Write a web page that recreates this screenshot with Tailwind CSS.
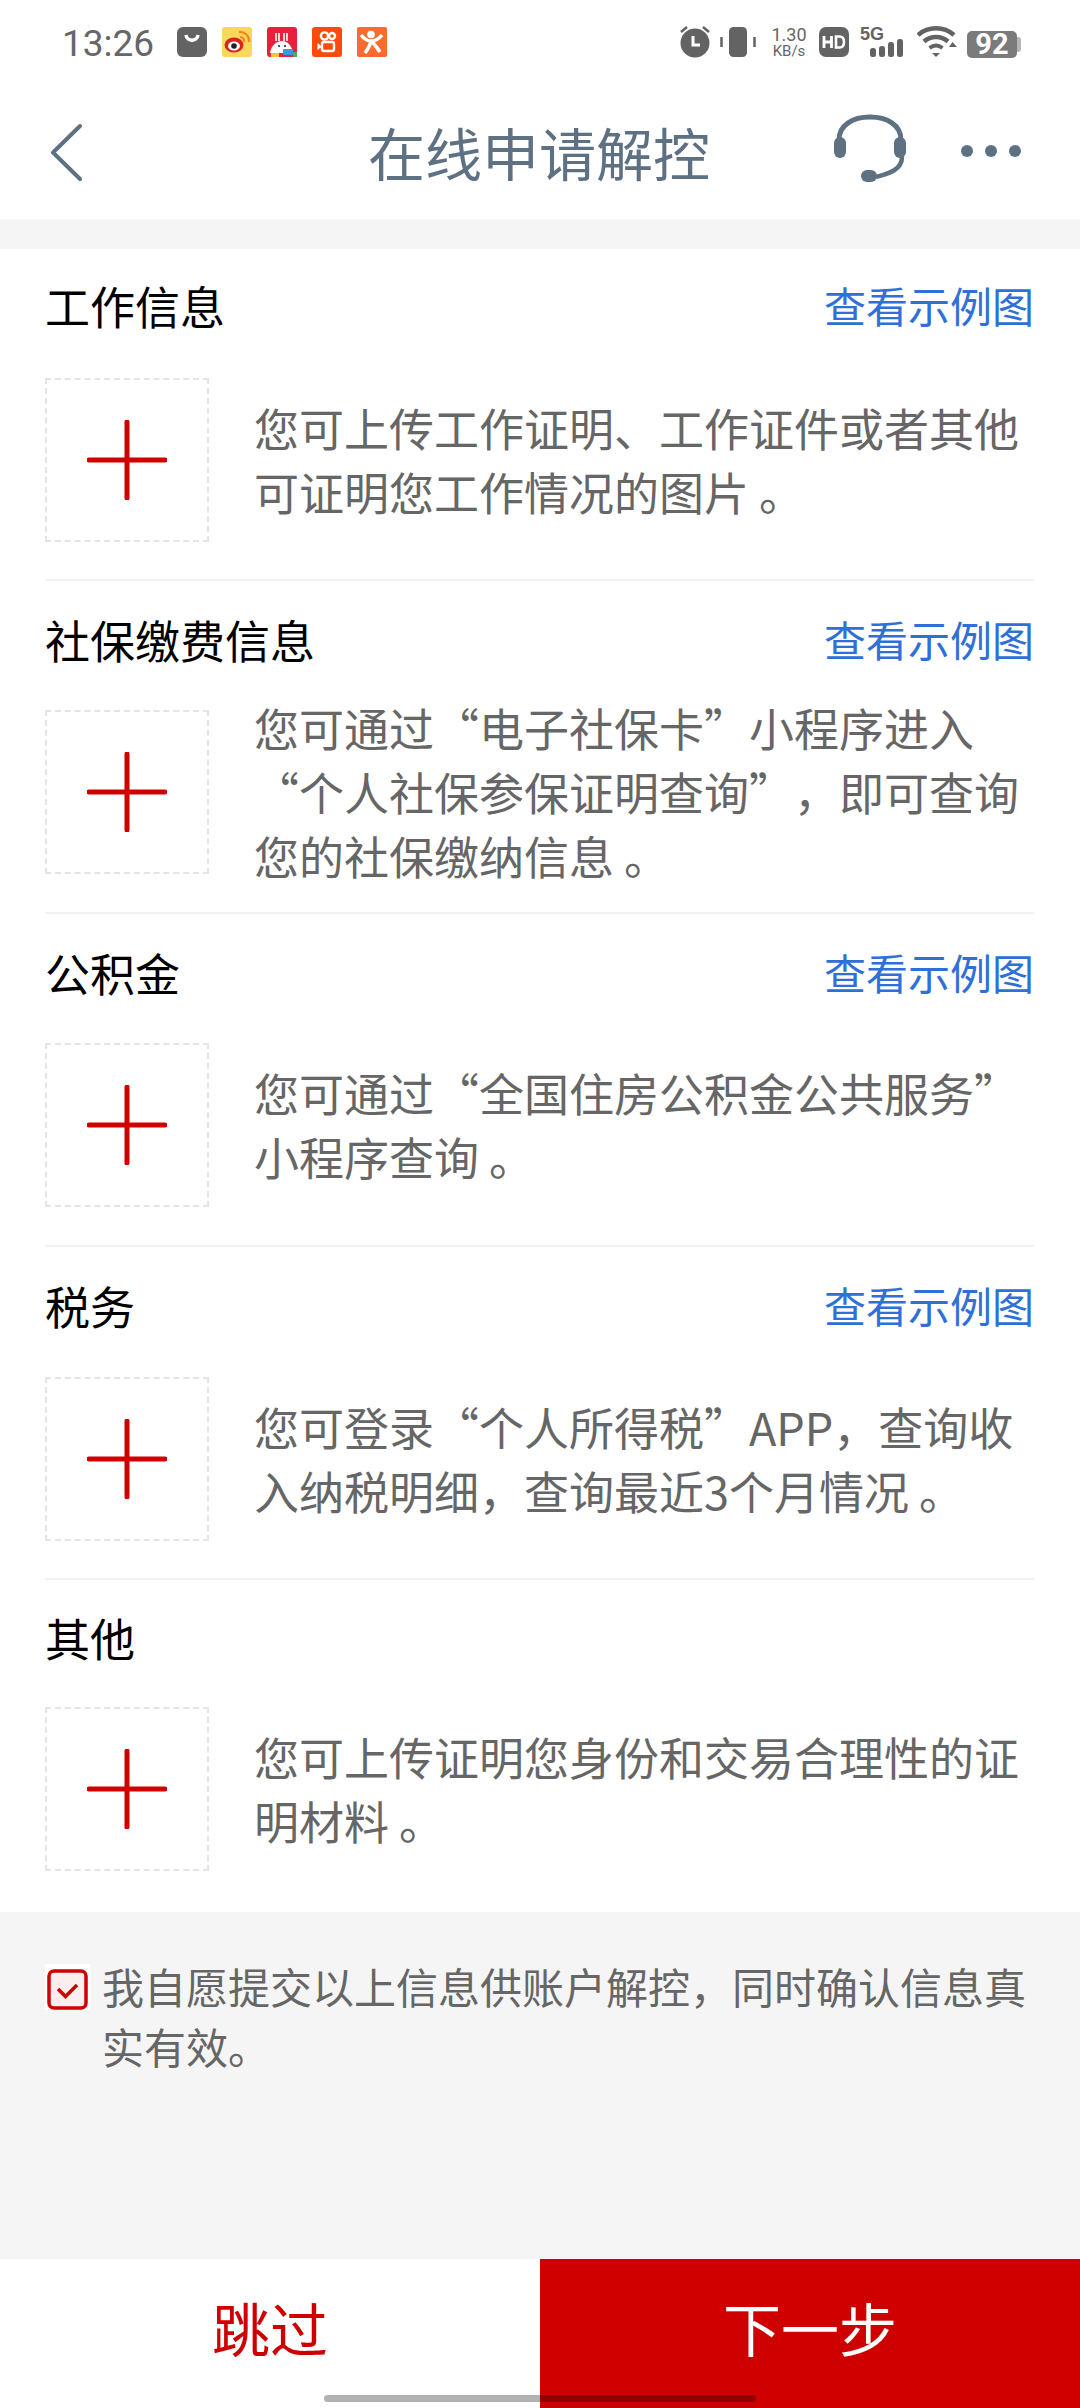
<!DOCTYPE html>
<html lang="zh-CN"><head><meta charset="utf-8"><script src="https://cdn.jsdelivr.net/npm/@tailwindcss/browser@4"></script></head>
<body class="m-0 bg-white">
<div class="w-[1080px] h-[2408px] flex flex-col relative overflow-hidden font-['Noto_Sans_CJK_SC','Noto_Sans',sans-serif] bg-white [text-spacing-trim:space-all]">
  <!-- status bar -->
  <div class="h-[88px] shrink-0 relative text-[#666]">
    <div class="absolute left-[62px] top-[22px] text-[37px] leading-[44px] font-['Roboto',sans-serif] text-[#666]">13:26</div>
    <div class="absolute left-[177px] top-[27px] flex gap-[15px]">
      <svg class="w-[30px] h-[30px]" viewBox="0 0 30 30"><rect width="30" height="30" rx="6" fill="#636363"/><path d="M9 8c1 7 11 7 12 0" stroke="#fff" stroke-width="3.5" fill="none"/></svg>
      <svg class="w-[30px] h-[30px]" viewBox="0 0 30 30"><rect width="30" height="30" rx="3" fill="#fcd75c"/><ellipse cx="12" cy="18" rx="9.500" ry="7.500" fill="#e02020"/><ellipse cx="12" cy="19" rx="6" ry="4.500" fill="#fff"/><circle cx="12" cy="19" r="2.800" fill="#222"/><path d="M17 5a9 9 0 0 1 10 10M18 10a4 4 0 0 1 4 5" stroke="#f08a1c" stroke-width="2.200" fill="none"/></svg>
      <svg class="w-[30px] h-[30px]" viewBox="0 0 30 30"><rect width="30" height="30" rx="3" fill="#e8203c"/><path d="M9 6v8M12 6v8M17 6v8M20 6v8" stroke="#fff" stroke-width="1.600"/><path d="M8 14h14M3 26c1-7 6-12 12-12s10 5 11 12z" fill="#fff"/><circle cx="12" cy="19" r="1" fill="#222"/><circle cx="18" cy="19" r="1" fill="#222"/><rect x="16" y="22" width="10" height="6" rx="1" fill="#3a9ad9"/><rect x="4" y="26" width="8" height="4" fill="#f5c92e"/><rect x="26" y="25" width="4" height="5" fill="#3fae55"/></svg>
      <svg class="w-[30px] h-[30px]" viewBox="0 0 30 30"><rect width="30" height="30" rx="3" fill="#fb4b0c"/><circle cx="12.500" cy="9" r="3.600" fill="none" stroke="#fff" stroke-width="2.400"/><circle cx="20" cy="9" r="3" fill="none" stroke="#fff" stroke-width="2.400"/><rect x="10" y="15" width="12" height="9" rx="2" fill="none" stroke="#fff" stroke-width="2.400"/><path d="M10 19.500l-4.500 3.500v-7z" fill="#fff"/></svg>
      <svg class="w-[30px] h-[30px]" viewBox="0 0 30 30"><rect width="30" height="30" rx="2" fill="#fb6a2f"/><circle cx="14" cy="7.500" r="3.800" fill="#fff"/><path d="M4 8c4 5 7 6 10 6s7-1 11-6M14 14c-1 5-3 8-6 12M14 14c3 2 6 7 9 11" stroke="#fff" stroke-width="3.600" fill="none"/></svg>
    </div>
    <div class="absolute left-[678px] top-[25px] flex items-center">
      <svg class="w-[34px] h-[34px] mr-[8px]" viewBox="0 0 34 34"><path d="M3 7l6-5M31 7l-6-5" stroke="#636363" stroke-width="2.500"/><circle cx="17" cy="18" r="14.500" fill="#636363"/><path d="M15 11v9h7" stroke="#fff" stroke-width="3" fill="none"/></svg>
      <svg class="w-[36px] h-[32px] mr-[14px]" viewBox="0 0 36 32"><rect x="9" y="1" width="18" height="30" rx="4.500" fill="#636363"/><path d="M1.500 11v10M34.500 11v10" stroke="#636363" stroke-width="2.500"/></svg>
      <div class="w-[38px] mr-[11px] flex flex-col items-center text-[#666] font-['Roboto',sans-serif]"><span class="text-[18px] leading-[18px]">1.30</span><span class="text-[15px] leading-[15px]">KB/s</span></div>
      <svg class="w-[30px] h-[30px] mr-[11px]" viewBox="0 0 30 30"><rect width="30" height="30" rx="7" fill="#636363"/><path d="M5 9v12M12.500 9v12M5 15h7.500" stroke="#fff" stroke-width="2.800" fill="none"/><path d="M17 9.500h3.500q4.500 0 4.500 5.500t-4.500 5.500h-3.500z" stroke="#fff" stroke-width="2.600" fill="none"/></svg>
      <div class="w-[44px] h-[32px] mr-[13px] relative">
        <span class="absolute left-0 top-[-2px] text-[18px] leading-[20px] font-bold font-['Liberation_Sans',sans-serif] text-[#636363]">5G</span>
        <svg class="absolute left-0 top-0 w-[44px] h-[32px]" viewBox="0 0 44 32"><rect x="10" y="22" width="6" height="9" rx="2.500" fill="#636363"/><rect x="19" y="20" width="6" height="11" rx="2.500" fill="#636363"/><rect x="28" y="16" width="6" height="15" rx="2.500" fill="#636363"/><rect x="37" y="13" width="6" height="18" rx="2.500" fill="#636363"/></svg>
      </div>
      <svg class="w-[40px] h-[32px] mr-[10px]" viewBox="0 0 40 32"><path d="M1 9c10-9 26-9 36 0" stroke="#636363" stroke-width="4.500" fill="none"/><path d="M7 15.500c7-6 17-6 24 0" stroke="#636363" stroke-width="4.500" fill="none"/><path d="M12.500 22c4-3 9-3 13 0" stroke="#636363" stroke-width="4" fill="none"/><path d="M15 27h8l-4 4z" fill="#636363"/><path d="M32 21l3.500-5 4.500 5z" fill="#636363"/></svg>
      <div class="relative w-[50px] h-[27px] mt-[5px] rounded-[5px] bg-[#7b7b7b] flex items-center justify-center text-white text-[29px] leading-[27px] font-bold font-['Roboto',sans-serif]">92<span class="absolute right-[-4px] top-[6px] w-[4px] h-[15px] rounded-r-[3px] bg-[#b5b5b5]"></span></div>
    </div>
  </div>
  <!-- nav -->
  <div class="h-[131px] shrink-0 relative flex items-center justify-center text-[#5d7183]">
    <svg class="absolute left-[48px] top-[35px] w-[40px] h-[60px]" viewBox="0 0 40 60"><path d="M32 3 5 29.500 32 56" stroke="#5d7183" stroke-width="4" stroke-linecap="round" stroke-linejoin="round" fill="none"/></svg>
    <span class="text-[57px] leading-[70px] relative top-[-3px] left-[-1px]">在线申请解控</span>
    <svg class="absolute left-[830px] top-[25px] w-[80px] h-[76px]" viewBox="0 0 80 76"><path d="M9 32V27C9 12 23 4 40 4s31 8 31 23v5" stroke="#5d7183" stroke-width="5" fill="none"/><rect x="4" y="24" width="12" height="21" rx="6" fill="#5d7183"/><rect x="64" y="24" width="12" height="21" rx="6" fill="#5d7183"/><path d="M72 44c0 14-16 17-26 20" stroke="#5d7183" stroke-width="4.500" fill="none"/><rect x="31" y="57" width="16" height="12" rx="6" fill="#5d7183"/></svg>
    <div class="absolute left-[961px] top-[57px] flex gap-[12px]"><i class="block w-[12px] h-[12px] rounded-full bg-[#5d7183]"></i><i class="block w-[12px] h-[12px] rounded-full bg-[#5d7183]"></i><i class="block w-[12px] h-[12px] rounded-full bg-[#5d7183]"></i></div>
  </div>
  <div class="h-[30px] shrink-0 bg-[#f5f5f5]"></div>

  <!-- sections -->
  <div class="h-[1663px] shrink-0 pl-[45px] pr-[46px] bg-white flex flex-col">
    <section class="h-[332px] shrink-0 border-b-[2px] border-[#f2f2f2]">
      <div class="h-[118px] flex items-start justify-between pt-[28px]"><h2 class="text-[45px] leading-[58px] text-black font-normal">工作信息</h2><a class="text-[42px] leading-[56px] text-[#2f70d8]">查看示例图</a></div>
      <div class="flex items-center gap-[45px] h-[164px] mt-[11px]">
        <div class="w-[164px] h-[164px] shrink-0 border-[2px] border-dashed border-[#e4e4e4] flex items-center justify-center"><svg class="w-[80px] h-[80px]" viewBox="0 0 80 80"><path d="M2 40h76M40 2v76" stroke="#cf0000" stroke-width="5" stroke-linecap="round"/></svg></div>
        <p class="text-[45px] leading-[64px] text-[#666]">您可上传工作证明、工作证件或者其他可证明您工作情况的图片<span class="ml-[10px]">。</span></p>
      </div>
    </section>
    <section class="h-[333px] shrink-0 border-b-[2px] border-[#f2f2f2]">
      <div class="h-[118px] flex items-start justify-between pt-[30px]"><h2 class="text-[45px] leading-[58px] text-black font-normal">社保缴费信息</h2><a class="text-[42px] leading-[56px] text-[#2f70d8]">查看示例图</a></div>
      <div class="flex items-center gap-[45px] h-[164px] mt-[11px]">
        <div class="w-[164px] h-[164px] shrink-0 border-[2px] border-dashed border-[#e4e4e4] flex items-center justify-center"><svg class="w-[80px] h-[80px]" viewBox="0 0 80 80"><path d="M2 40h76M40 2v76" stroke="#cf0000" stroke-width="5" stroke-linecap="round"/></svg></div>
        <p class="text-[45px] leading-[64px] text-[#666]">您可通过“电子社保卡”小程序进入“个人社保参保证明查询”&#xFF0C;即可查询您的社保缴纳信息<span class="ml-[10px]">。</span></p>
      </div>
    </section>
    <section class="h-[333px] shrink-0 border-b-[2px] border-[#f2f2f2]">
      <div class="h-[118px] flex items-start justify-between pt-[30px]"><h2 class="text-[45px] leading-[58px] text-black font-normal">公积金</h2><a class="text-[42px] leading-[56px] text-[#2f70d8]">查看示例图</a></div>
      <div class="flex items-center gap-[45px] h-[164px] mt-[11px]">
        <div class="w-[164px] h-[164px] shrink-0 border-[2px] border-dashed border-[#e4e4e4] flex items-center justify-center"><svg class="w-[80px] h-[80px]" viewBox="0 0 80 80"><path d="M2 40h76M40 2v76" stroke="#cf0000" stroke-width="5" stroke-linecap="round"/></svg></div>
        <p class="text-[45px] leading-[64px] text-[#666]">您可通过“全国住房公积金公共服务”小程序查询<span class="ml-[10px]">。</span></p>
      </div>
    </section>
    <section class="h-[333px] shrink-0 border-b-[2px] border-[#f2f2f2]">
      <div class="h-[118px] flex items-start justify-between pt-[30px]"><h2 class="text-[45px] leading-[58px] text-black font-normal">税务</h2><a class="text-[42px] leading-[56px] text-[#2f70d8]">查看示例图</a></div>
      <div class="flex items-center gap-[45px] h-[164px] mt-[12px]">
        <div class="w-[164px] h-[164px] shrink-0 border-[2px] border-dashed border-[#e4e4e4] flex items-center justify-center"><svg class="w-[80px] h-[80px]" viewBox="0 0 80 80"><path d="M2 40h76M40 2v76" stroke="#cf0000" stroke-width="5" stroke-linecap="round"/></svg></div>
        <p class="text-[45px] leading-[64px] text-[#666]">您可登录“个人所得税”APP&#xFF0C;查询收入纳税明细&#xFF0C;查询最近3个月情况<span class="ml-[10px]">。</span></p>
      </div>
    </section>
    <section class="flex-1">
      <div class="h-[118px] flex items-start justify-between pt-[29px]"><h2 class="text-[45px] leading-[58px] text-black font-normal">其他</h2></div>
      <div class="flex items-center gap-[45px] h-[164px] mt-[9px]">
        <div class="w-[164px] h-[164px] shrink-0 border-[2px] border-dashed border-[#e4e4e4] flex items-center justify-center"><svg class="w-[80px] h-[80px]" viewBox="0 0 80 80"><path d="M2 40h76M40 2v76" stroke="#cf0000" stroke-width="5" stroke-linecap="round"/></svg></div>
        <p class="text-[45px] leading-[64px] text-[#666]">您可上传证明您身份和交易合理性的证明材料<span class="ml-[10px]">。</span></p>
      </div>
    </section>
  </div>

  <!-- consent -->
  <div class="flex-1 bg-[#f5f5f6] pl-[45px] pr-[36px] pt-[44px] flex items-start">
    <div class="w-[45px] h-[46px] shrink-0 bg-white flex items-end justify-center mt-[8px]"><svg class="w-[41px] h-[41px]" viewBox="0 0 41 41"><rect x="2" y="2" width="37" height="37" rx="5" fill="#fbeeee" stroke="#cf0000" stroke-width="3.500"/><path d="M11 20l7.500 7.500L30 16" stroke="#cf0000" stroke-width="3.500" fill="none"/></svg></div>
    <p class="ml-[12px] text-[42px] leading-[60px] text-[#666]">我自愿提交以上信息供账户解控&#xFF0C;同时确认信息真实有效。</p>
  </div>

  <!-- bottom -->
  <div class="h-[149px] shrink-0 flex">
    <button class="w-[540px] bg-white text-[#cf0000] text-[58px] leading-[70px] pb-[14px] font-normal">跳过</button>
    <button class="w-[540px] bg-[#cf0000] text-white text-[58px] leading-[70px] pb-[14px] font-normal">下一步</button>
  </div>
  <div class="absolute left-[324px] top-[2395px] w-[432px] h-[7px] rounded-full bg-black/30"></div>
</div>
</body></html>
